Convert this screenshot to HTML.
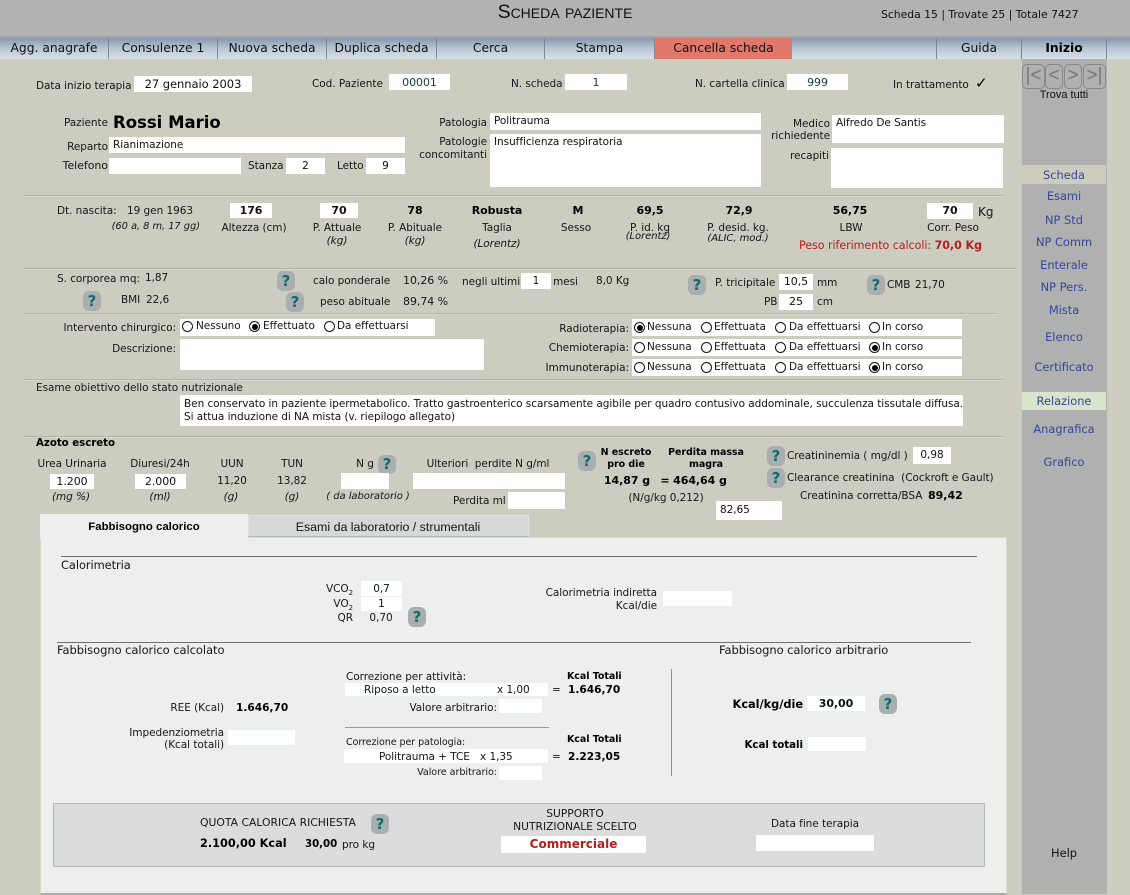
<!DOCTYPE html>
<html lang="it"><head><meta charset="utf-8"><title>Scheda paziente</title>
<style>
html,body{margin:0;padding:0}
body{width:1130px;height:894px;overflow:hidden;background:#cccdc0;position:relative;font:10.5px/14px "DejaVu Sans","Liberation Sans",sans-serif;letter-spacing:-.05px;color:#161616}
.t,.b,.q,.h,.r{position:absolute;white-space:nowrap}
.t{line-height:14px;margin-top:1px}
.c{transform:translateX(-50%)}
.B{font-weight:bold;color:#000}
.I{font-style:italic}
.b{background:#fff;text-align:center;color:#111}
.l{text-align:left;padding-left:4px;box-sizing:border-box}
.h{height:1px;background:#b5b6a8;border-bottom:1px solid #d6d7cb}
.q{width:18px;height:20px;border-radius:6px;background:#a9aeae;color:#136b70;font:bold 15px/20px "DejaVu Sans",sans-serif;text-align:center}
.r{width:9px;height:9px;border:1.4px solid #111;border-radius:50%;background:#fff}
.r.o::after{content:"";position:absolute;left:1.5px;top:1.5px;width:6px;height:6px;border-radius:50%;background:#000}
.tab{position:absolute;top:38px;height:21px;line-height:21px;text-align:center;font-size:12.3px;letter-spacing:0;color:#111;border-right:1.5px solid #7e8a96;box-sizing:border-box}
.s{position:absolute;left:1022px;width:84px;text-align:center;color:#33489a;font-size:11.4px;letter-spacing:0;line-height:18px}
.n{position:absolute;top:64px;height:23px;border:1px solid #888;border-radius:5px;color:#777;font:19px/22px "Liberation Sans",sans-serif;text-align:center;letter-spacing:0}
</style></head><body>

<!-- header -->
<div style="position:absolute;left:0;top:0;width:1130px;height:36px;background:#b2b2b2"></div>
<div style="position:absolute;left:0;top:36px;width:1130px;height:2px;background:#a2a2a2"></div>
<div style="position:absolute;left:0;top:38px;width:1130px;height:21px;background:linear-gradient(#8497af,#b4c2d0 45%,#dbe2e8)"></div>
<div class="t c" style="left:565px;top:2px;margin:0;letter-spacing:0;font:19.5px/20px 'Liberation Sans',sans-serif;font-variant:small-caps;color:#111">Scheda paziente</div>
<div class="t" style="left:881px;top:7px;font-size:10.8px;letter-spacing:0;color:#111">Scheda 15 | Trovate 25 | Totale 7427</div>

<div class="tab" style="left:0;width:109px">Agg. anagrafe</div>
<div class="tab" style="left:109px;width:109px">Consulenze 1</div>
<div class="tab" style="left:218px;width:109px">Nuova scheda</div>
<div class="tab" style="left:327px;width:110px">Duplica scheda</div>
<div class="tab" style="left:437px;width:108px">Cerca</div>
<div class="tab" style="left:545px;width:110px">Stampa</div>
<div class="tab" style="left:655px;width:137px;background:#e2786c;border:0">Cancella scheda</div>
<div class="tab" style="left:792px;width:145px"></div>
<div class="tab" style="left:937px;width:85px">Guida</div>
<div class="tab" style="left:1022px;width:85px;font-weight:bold;color:#000">Inizio</div>

<!-- sidebar -->
<div style="position:absolute;left:1022px;top:59px;width:85px;height:835px;background:#b0b0b0"></div>
<div class="n" style="left:1022px;width:21px">|&lt;</div><div class="n" style="left:1045px;width:16px">&lt;</div><div class="n" style="left:1064px;width:16px">&gt;</div><div class="n" style="left:1083px;width:21px">&gt;|</div>
<div class="t c" style="left:1064px;top:87px;font:11px/14px 'Liberation Sans',sans-serif;letter-spacing:0;color:#111">Trova tutti</div>
<div class="s" style="top:165px;height:19px;background:#cccdc0;line-height:20px">Scheda</div>
<div class="s" style="top:187px">Esami</div>
<div class="s" style="top:211px">NP Std</div>
<div class="s" style="top:233px">NP Comm</div>
<div class="s" style="top:256px">Enterale</div>
<div class="s" style="top:278px">NP Pers.</div>
<div class="s" style="top:301px">Mista</div>
<div class="s" style="top:328px">Elenco</div>
<div class="s" style="top:358px">Certificato</div>
<div class="s" style="top:392px;height:18px;background:#d9e5cb">Relazione</div>
<div class="s" style="top:420px">Anagrafica</div>
<div class="s" style="top:453px">Grafico</div>
<div class="s" style="top:844px;color:#111">Help</div>

<!-- row 1 -->
<div class="t" style="left:36px;top:78px">Data inizio terapia</div>
<div class="b" style="left:134px;top:76px;width:118px;height:16px;line-height:17px;font-size:11.5px">27 gennaio 2003</div>
<div class="t" style="left:312px;top:76px">Cod. Paziente</div>
<div class="b" style="left:389px;top:74px;width:61px;height:16px;line-height:17px;font-size:11px;color:#123a44">00001</div>
<div class="t" style="left:511px;top:76px">N. scheda</div>
<div class="b" style="left:565px;top:74px;width:62px;height:16px;line-height:17px;font-size:11px;color:#123a44">1</div>
<div class="t" style="left:695px;top:76px">N. cartella clinica</div>
<div class="b" style="left:787px;top:74px;width:61px;height:16px;line-height:17px;font-size:11px;color:#123a44">999</div>
<div class="t" style="left:893px;top:77px">In trattamento</div>
<div class="t B" style="left:975px;top:75px;font-size:15px">✓</div>

<!-- patient -->
<div class="t" style="right:1022px;top:115px">Paziente</div>
<div class="t B" style="left:113px;top:113px;font-size:16.5px;letter-spacing:0;line-height:18px">Rossi Mario</div>
<div class="t" style="right:1022px;top:139px">Reparto</div>
<div class="b l" style="left:109px;top:137px;width:296px;height:16px;line-height:16px">Rianimazione</div>
<div class="t" style="right:1022px;top:158px;font-size:11px">Telefono</div>
<div class="b" style="left:109px;top:158px;width:132px;height:16px"></div>
<div class="t" style="left:248px;top:158px">Stanza</div>
<div class="b" style="left:286px;top:158px;width:39px;height:16px;line-height:16px">2</div>
<div class="t" style="left:337px;top:158px">Letto</div>
<div class="b" style="left:366px;top:158px;width:39px;height:16px;line-height:16px">9</div>
<div class="t" style="right:643px;top:115px">Patologia</div>
<div class="b l" style="left:490px;top:113px;width:271px;height:17px;line-height:16px">Politrauma</div>
<div class="t" style="right:643px;top:134px">Patologie</div>
<div class="t" style="right:643px;top:147px">concomitanti</div>
<div class="b l" style="left:490px;top:134px;width:271px;height:53px;line-height:16px">Insufficienza respiratoria</div>
<div class="t" style="right:300px;top:116px">Medico</div>
<div class="t" style="right:300px;top:128px">richiedente</div>
<div class="b l" style="left:832px;top:115px;width:172px;height:28px;line-height:16px">Alfredo De Santis</div>
<div class="t" style="right:301px;top:148px">recapiti</div>
<div class="b" style="left:831px;top:148px;width:172px;height:40px"></div>

<div class="h" style="left:24px;top:195px;width:979px"></div>

<!-- measures -->
<div class="t" style="left:57px;top:203px">Dt. nascita:</div>
<div class="t" style="left:127px;top:203px">19 gen 1963</div>
<div class="t I" style="right:930px;top:219px;font-size:9.9px">(60 a, 8 m, 17 gg)</div>
<div class="b B" style="left:230px;top:203px;width:42px;height:15px;line-height:16px;font-size:11px">176</div>
<div class="t c" style="left:254px;top:220px">Altezza (cm)</div>
<div class="b B" style="left:320px;top:203px;width:38px;height:15px;line-height:16px;font-size:11px">70</div>
<div class="t c" style="left:337px;top:220px">P. Attuale</div>
<div class="t c I" style="left:337px;top:233px">(kg)</div>
<div class="t c B" style="left:415px;top:203px;font-size:11px">78</div>
<div class="t c" style="left:415px;top:220px">P. Abituale</div>
<div class="t c I" style="left:415px;top:233px">(kg)</div>
<div class="t c B" style="left:497px;top:203px;font-size:11px">Robusta</div>
<div class="t c" style="left:497px;top:220px">Taglia</div>
<div class="t c I" style="left:497px;top:236px">(Lorentz)</div>
<div class="t c B" style="left:578px;top:203px;font-size:11px">M</div>
<div class="t c" style="left:576px;top:220px">Sesso</div>
<div class="t c B" style="left:650px;top:203px;font-size:11px">69,5</div>
<div class="t c" style="left:650px;top:220px">P. id. kg</div>
<div class="t c I" style="left:648px;top:229px;font-size:10px">(Lorentz)</div>
<div class="t c B" style="left:739px;top:203px;font-size:11px">72,9</div>
<div class="t c" style="left:738px;top:220px">P. desid. kg.</div>
<div class="t c I" style="left:738px;top:231px;font-size:10px">(ALIC, mod.)</div>
<div class="t c B" style="left:850px;top:203px;font-size:11px">56,75</div>
<div class="t c" style="left:851px;top:220px">LBW</div>
<div class="b B" style="left:927px;top:203px;width:46px;height:16px;line-height:16px;font-size:11px">70</div>
<div class="t" style="left:978px;top:204px;font-size:12px">Kg</div>
<div class="t c" style="left:953px;top:220px">Corr. Peso</div>
<div class="t" style="left:799px;top:238px;color:#b3201c;font-size:11.1px">Peso riferimento calcoli: <b>70,0 Kg</b></div>

<div class="h" style="left:24px;top:268px;width:993px"></div>

<!-- section 2 -->
<div class="t" style="left:57px;top:271px">S. corporea mq:</div>
<div class="t" style="left:145px;top:270px">1,87</div>
<div class="q" style="left:277px;top:271px">?</div>
<div class="t" style="left:313px;top:273px">calo ponderale</div>
<div class="t" style="left:403px;top:273px;font-size:11px">10,26 %</div>
<div class="t" style="left:462px;top:274px">negli ultimi</div>
<div class="b" style="left:521px;top:273px;width:30px;height:16px;line-height:16px">1</div>
<div class="t" style="left:553px;top:274px">mesi</div>
<div class="t" style="left:596px;top:273px">8,0 Kg</div>
<div class="q" style="left:688px;top:275px">?</div>
<div class="t" style="left:715px;top:275px">P. tricipitale</div>
<div class="b" style="left:779px;top:274px;width:34px;height:16px;line-height:16px;font-size:11px">10,5</div>
<div class="t" style="left:817px;top:275px">mm</div>
<div class="q" style="left:867px;top:275px">?</div>
<div class="t" style="left:887px;top:277px">CMB</div>
<div class="t" style="left:915px;top:277px">21,70</div>
<div class="q" style="left:83px;top:291px">?</div>
<div class="t" style="left:121px;top:292px">BMI</div>
<div class="t" style="left:146px;top:292px">22,6</div>
<div class="q" style="left:286px;top:292px">?</div>
<div class="t" style="left:320px;top:294px">peso abituale</div>
<div class="t" style="left:403px;top:294px;font-size:11px">89,74 %</div>
<div class="t" style="left:764px;top:294px">PB</div>
<div class="b" style="left:779px;top:294px;width:34px;height:16px;line-height:16px;font-size:11px">25</div>
<div class="t" style="left:817px;top:294px">cm</div>

<div class="h" style="left:24px;top:313px;width:973px"></div>

<!-- therapy -->
<div class="t" style="right:954px;top:320px">Intervento chirurgico:</div>
<div class="b" style="left:180px;top:319px;width:255px;height:17px"></div>
<div class="r" style="left:182px;top:321px"></div><div class="t" style="left:196px;top:318px">Nessuno</div>
<div class="r o" style="left:249px;top:321px"></div><div class="t" style="left:263px;top:318px">Effettuato</div>
<div class="r" style="left:324px;top:321px"></div><div class="t" style="left:337px;top:318px">Da effettuarsi</div>
<div class="t" style="right:954px;top:341px">Descrizione:</div>
<div class="b" style="left:180px;top:339px;width:304px;height:31px"></div>

<div class="t" style="right:501px;top:321px">Radioterapia:</div>
<div class="b" style="left:632px;top:319px;width:330px;height:17px"></div>
<div class="r o" style="left:634px;top:322px"></div><div class="t" style="left:647px;top:319px">Nessuna</div>
<div class="r" style="left:701px;top:322px"></div><div class="t" style="left:714px;top:319px">Effettuata</div>
<div class="r" style="left:775px;top:322px"></div><div class="t" style="left:789px;top:319px">Da effettuarsi</div>
<div class="r" style="left:869px;top:322px"></div><div class="t" style="left:882px;top:319px">In corso</div>

<div class="t" style="right:501px;top:340px">Chemioterapia:</div>
<div class="b" style="left:632px;top:339px;width:330px;height:17px"></div>
<div class="r" style="left:634px;top:342px"></div><div class="t" style="left:647px;top:339px">Nessuna</div>
<div class="r" style="left:701px;top:342px"></div><div class="t" style="left:714px;top:339px">Effettuata</div>
<div class="r" style="left:775px;top:342px"></div><div class="t" style="left:789px;top:339px">Da effettuarsi</div>
<div class="r o" style="left:869px;top:342px"></div><div class="t" style="left:882px;top:339px">In corso</div>

<div class="t" style="right:501px;top:360px">Immunoterapia:</div>
<div class="b" style="left:632px;top:359px;width:330px;height:17px"></div>
<div class="r" style="left:634px;top:362px"></div><div class="t" style="left:647px;top:359px">Nessuna</div>
<div class="r" style="left:701px;top:362px"></div><div class="t" style="left:714px;top:359px">Effettuata</div>
<div class="r" style="left:775px;top:362px"></div><div class="t" style="left:789px;top:359px">Da effettuarsi</div>
<div class="r o" style="left:869px;top:362px"></div><div class="t" style="left:882px;top:359px">In corso</div>

<div class="h" style="left:24px;top:379px;width:979px"></div>

<div class="t" style="left:36px;top:380px">Esame obiettivo dello stato nutrizionale</div>
<div class="b" style="left:180px;top:395px;width:783px;height:31px"></div>
<div class="t" style="left:184px;top:396px;color:#111">Ben conservato in paziente ipermetabolico. Tratto gastroenterico scarsamente agibile per quadro contusivo addominale, succulenza tissutale diffusa.</div>
<div class="t" style="left:184px;top:409px;color:#111">Si attua induzione di NA mista (v. riepilogo allegato)</div>

<div class="h" style="left:24px;top:436px;width:982px"></div>

<!-- azoto -->
<div class="t B" style="left:36px;top:436px;font-size:10.2px;letter-spacing:0">Azoto escreto</div>
<div class="t c" style="left:72px;top:456px">Urea Urinaria</div>
<div class="t c" style="left:160px;top:456px">Diuresi/24h</div>
<div class="t c" style="left:232px;top:456px">UUN</div>
<div class="t c" style="left:292px;top:456px">TUN</div>
<div class="t c" style="left:365px;top:456px">N g</div>
<div class="q" style="left:378px;top:455px;height:19px;line-height:19px">?</div>
<div class="t c" style="left:488px;top:456px">Ulteriori&nbsp; perdite N g/ml</div>
<div class="b" style="left:50px;top:474px;width:44px;height:15px;line-height:16px;font-size:11px">1.200</div>
<div class="b" style="left:135px;top:474px;width:51px;height:15px;line-height:16px;font-size:11px">2.000</div>
<div class="t c" style="left:232px;top:473px">11,20</div>
<div class="t c" style="left:292px;top:473px">13,82</div>
<div class="b" style="left:341px;top:473px;width:48px;height:16px"></div>
<div class="b" style="left:413px;top:473px;width:152px;height:16px"></div>
<div class="t c I" style="left:71px;top:489px">(mg %)</div>
<div class="t c I" style="left:160px;top:489px">(ml)</div>
<div class="t c I" style="left:231px;top:489px">(g)</div>
<div class="t c I" style="left:292px;top:489px">(g)</div>
<div class="t c I" style="left:368px;top:489px;font-size:10px">( da laboratorio )</div>
<div class="t" style="left:453px;top:493px">Perdita ml</div>
<div class="b" style="left:508px;top:492px;width:57px;height:17px"></div>

<div class="q" style="left:578px;top:451px">?</div>
<div class="t c B" style="left:626px;top:445px;font-size:9.5px">N escreto</div>
<div class="t c B" style="left:626px;top:457px;font-size:9.5px">pro die</div>
<div class="t c B" style="left:706px;top:445px;font-size:9.5px">Perdita massa</div>
<div class="t c B" style="left:706px;top:457px;font-size:9.5px">magra</div>
<div class="t c B" style="left:627px;top:473px;font-size:11px">14,87 g</div>
<div class="t c B" style="left:665px;top:473px;font-size:11px">=</div>
<div class="t c B" style="left:700px;top:473px;font-size:11px">464,64 g</div>
<div class="t c" style="left:666px;top:490px;font-size:10.5px">(N/g/kg 0,212)</div>
<div class="b l" style="left:716px;top:501px;width:66px;height:19px;line-height:18px">82,65</div>
<div class="q" style="left:767px;top:446px">?</div>
<div class="t" style="left:787px;top:448px">Creatininemia ( mg/dl )</div>
<div class="b" style="left:913px;top:447px;width:38px;height:17px;line-height:16px">0,98</div>
<div class="q" style="left:767px;top:468px">?</div>
<div class="t" style="left:787px;top:470px">Clearance creatinina&nbsp; (Cockroft e Gault)</div>
<div class="t" style="left:800px;top:488px">Creatinina corretta/BSA</div>
<div class="t B" style="left:928px;top:488px;font-size:11px;letter-spacing:0">89,42</div>

<!-- tabbed panel -->
<div style="position:absolute;left:40px;top:537px;width:965px;height:355px;background:#edeeee;border:1px solid #d8d9d0;border-bottom:2px solid #aaa"></div>
<div style="position:absolute;left:248px;top:515px;width:281px;height:22px;background:#d7d7d7;border:1px solid #e2e2e0;border-bottom:1px solid #b8b8b8;box-sizing:border-box"></div>
<div style="position:absolute;left:40px;top:514px;width:208px;height:25px;background:#edeeee"></div>
<div class="t c B" style="left:144px;top:520px;margin:0;letter-spacing:0;font:bold 11.4px/14px 'Liberation Sans',sans-serif">Fabbisogno calorico</div>
<div class="t c" style="left:388px;top:520px;margin:0;letter-spacing:0;font:12.4px/14px 'Liberation Sans',sans-serif">Esami da laboratorio / strumentali</div>

<div style="position:absolute;left:61px;top:556px;width:916px;height:1px;background:#6f6f6f"></div>
<div class="t" style="left:61px;top:557px;font-size:11.4px">Calorimetria</div>
<div class="t" style="right:777px;top:581px">VCO<sub style="font-size:7px;line-height:0">2</sub></div>
<div class="b" style="left:361px;top:581px;width:41px;height:15px;line-height:16px">0,7</div>
<div class="t" style="right:777px;top:596px">VO<sub style="font-size:7px;line-height:0">2</sub></div>
<div class="b" style="left:361px;top:597px;width:41px;height:14px;line-height:15px">1</div>
<div class="t" style="right:777px;top:610px">QR</div>
<div class="t c" style="left:381px;top:610px">0,70</div>
<div class="q" style="left:408px;top:607px">?</div>
<div class="t" style="right:473px;top:585px">Calorimetria indiretta</div>
<div class="t" style="right:473px;top:598px">Kcal/die</div>
<div class="b" style="left:663px;top:591px;width:69px;height:15px"></div>

<div style="position:absolute;left:57px;top:642px;width:914px;height:1px;background:#6f6f6f"></div>
<div class="t" style="left:57px;top:642px;font-size:11.5px">Fabbisogno calorico calcolato</div>
<div class="t" style="left:719px;top:642px;font-size:11.5px">Fabbisogno calorico arbitrario</div>

<div class="t" style="left:346px;top:669px">Correzione per attività:</div>
<div class="b" style="left:345px;top:683px;width:203px;height:13px"></div>
<div class="t" style="left:364px;top:682px">Riposo a letto</div>
<div class="t" style="left:497px;top:682px">x 1,00</div>
<div class="t" style="left:552px;top:682px">=</div>
<div class="t B" style="left:567px;top:669px;font-size:9.5px">Kcal Totali</div>
<div class="t B" style="left:568px;top:682px;font-size:10.6px;letter-spacing:0">1.646,70</div>
<div class="t" style="right:906px;top:700px">REE (Kcal)</div>
<div class="t B" style="left:236px;top:700px;font-size:10.6px;letter-spacing:0">1.646,70</div>
<div class="t" style="right:633px;top:700px">Valore arbitrario:</div>
<div class="b" style="left:499px;top:699px;width:43px;height:14px"></div>
<div style="position:absolute;left:345px;top:727px;width:204px;height:1px;background:#9a9a9a"></div>
<div class="t" style="right:906px;top:725px">Impedenziometria</div>
<div class="t" style="right:906px;top:737px">(Kcal totali)</div>
<div class="b" style="left:228px;top:730px;width:67px;height:15px"></div>
<div class="t" style="left:346px;top:735px;font-size:9.5px">Correzione per patologia:</div>
<div class="b" style="left:344px;top:749px;width:204px;height:14px"></div>
<div class="t" style="left:379px;top:749px">Politrauma + TCE</div>
<div class="t" style="left:480px;top:749px">x 1,35</div>
<div class="t" style="left:552px;top:749px">=</div>
<div class="t B" style="left:567px;top:732px;font-size:9.5px">Kcal Totali</div>
<div class="t B" style="left:568px;top:749px;font-size:10.6px;letter-spacing:0">2.223,05</div>
<div class="t" style="right:633px;top:765px;font-size:9.6px">Valore arbitrario:</div>
<div class="b" style="left:499px;top:766px;width:43px;height:14px"></div>
<div style="position:absolute;left:671px;top:669px;width:1px;height:107px;background:#8f8f8f"></div>
<div class="t B" style="right:327px;top:696px;font-size:11.4px">Kcal/kg/die</div>
<div class="b B" style="left:807px;top:696px;width:58px;height:15px;line-height:16px;font-size:11px">30,00</div>
<div class="q" style="left:879px;top:694px">?</div>
<div class="t B" style="right:327px;top:737px;font-size:10.3px">Kcal totali</div>
<div class="b" style="left:808px;top:737px;width:58px;height:14px"></div>

<div style="position:absolute;left:53px;top:803px;width:930px;height:62px;background:#dcdcdc;border:1px solid #b5b5b5"></div>
<div class="t" style="left:200px;top:815px;font-size:10.8px;letter-spacing:0">QUOTA CALORICA RICHIESTA</div>
<div class="q" style="left:371px;top:814px">?</div>
<div class="t B" style="left:200px;top:836px;font-size:11.3px;letter-spacing:0">2.100,00 Kcal</div>
<div class="t B" style="left:305px;top:837px;font-size:10.2px;letter-spacing:0">30,00</div>
<div class="t" style="left:342px;top:837px">pro kg</div>
<div class="t c" style="left:575px;top:806px;font-size:10.7px;letter-spacing:0">SUPPORTO</div>
<div class="t c" style="left:575px;top:819px;font-size:10.7px;letter-spacing:0">NUTRIZIONALE SCELTO</div>
<div class="b" style="left:501px;top:836px;width:145px;height:17px;line-height:17px;font-weight:bold;font-size:12px;letter-spacing:0;color:#b3201c">Commerciale</div>
<div class="t c" style="left:815px;top:816px">Data fine terapia</div>
<div class="b" style="left:756px;top:835px;width:118px;height:16px"></div>

</body></html>
